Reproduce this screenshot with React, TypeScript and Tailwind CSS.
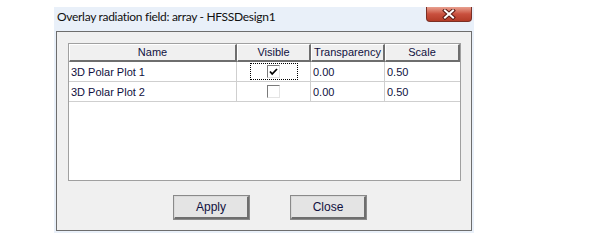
import React from "react";

const rows = [
  { name: "3D Polar Plot 1", visible: true, transparency: "0.00", scale: "0.50", focused: true },
  { name: "3D Polar Plot 2", visible: false, transparency: "0.00", scale: "0.50", focused: false },
];

const CloseGlyph = () => (
  <svg width="16" height="11" viewBox="0 0 16 11">
    <path d="M4 1.5 L12 8.5 M12 1.5 L4 8.5" stroke="#5a1a14" strokeWidth="4" strokeLinecap="square" />
    <path d="M4 1.5 L12 8.5 M12 1.5 L4 8.5" stroke="#ffffff" strokeWidth="2" strokeLinecap="square" />
  </svg>
);

const Checkbox = ({ checked }: { checked: boolean }) => (
  <div className="w-[13px] h-[13px] bg-white border-t border-l border-t-[#7a7a7a] border-l-[#7a7a7a] border-r border-b border-r-[#e4e4e4] border-b-[#e4e4e4] flex items-center justify-center">
    {checked && (
      <svg width="9" height="8" viewBox="0 0 9 8">
        <path d="M1 3.5 L3.2 6 L8 1" stroke="#000" strokeWidth="1.8" fill="none" />
      </svg>
    )}
  </div>
);

const HeadCell = ({ label, w }: { label: string; w: string }) => (
  <div
    className={`${w} h-[18px] flex items-center justify-center bg-[#f0f0f0] border-t border-l border-t-white border-l-white border-r-2 border-b-2 border-r-[#6e6e6e] border-b-[#6e6e6e] text-[11px] text-[#101040]`}
  >
    {label}
  </div>
);

const Btn = ({ label }: { label: string }) => (
  <button className="w-[75px] h-[23px] bg-[#e4e4e4] border border-t-[#dadada] border-l-[#dadada] border-r-2 border-b-2 border-r-[#6e6e6e] border-b-[#6e6e6e] outline outline-1 outline-[#8a8a8a] text-[12px] text-[#101040]">
    {label}
  </button>
);

export default function App() {
  return (
    <div className="w-[600px] h-[241px] bg-white pl-[54px] pt-[7px] font-['Liberation_Sans',sans-serif]">
      <div className="w-[420px] h-[226px] bg-[#e9f0f9] flex flex-col px-[2px] pb-[2px]">
        <div className="h-[24px] flex items-start justify-between">
          <span className="pl-[1px] pt-[1px] text-[12px] text-[#111] font-['Lato',sans-serif] tracking-[-0.3px]">
            Overlay radiation field: array - HFSSDesign1
          </span>
          <div className="w-[46px] h-[15px] rounded-b-[4px] border border-t-0 border-[#7b2f25] bg-gradient-to-b from-[#e8a090] via-[#c9503e] to-[#b33b27] flex items-center justify-center">
            <CloseGlyph />
          </div>
        </div>
        <div className="flex-1 bg-[#f0f0f0] border border-[#6d6d6d] pt-[11px] pl-[11px] pr-[10px] flex flex-col">
          <div className="w-[393px] h-[138px] bg-white border border-[#a0a0a0] flex flex-col">
            <div className="flex">
              <HeadCell label="Name" w="w-[168px]" />
              <HeadCell label="Visible" w="w-[74px]" />
              <HeadCell label="Transparency" w="w-[74px]" />
              <HeadCell label="Scale" w="w-[75px]" />
            </div>
            {rows.map((r) => (
              <div key={r.name} className="flex h-[20px] border-b border-[#cfcfcf] text-[11px] text-[#101040]">
                <div className="w-[168px] border-r border-[#cfcfcf] pl-[2px] pt-[1px] flex items-center">{r.name}</div>
                <div className="w-[74px] border-r border-[#cfcfcf] flex items-center justify-center">
                  <div
                    className={`w-[48px] h-[17px] flex items-center justify-center ${
                      r.focused ? "border border-dotted border-black" : ""
                    }`}
                  >
                    <Checkbox checked={r.visible} />
                  </div>
                </div>
                <div className="w-[74px] border-r border-[#cfcfcf] pl-[2px] pt-[1px] flex items-center">{r.transparency}</div>
                <div className="w-[75px] pl-[2px] pt-[1px] flex items-center">{r.scale}</div>
              </div>
            ))}
          </div>
          <div className="flex mt-[15px] pl-[106px] gap-[42px]">
            <Btn label="Apply" />
            <Btn label="Close" />
          </div>
        </div>
      </div>
    </div>
  );
}
